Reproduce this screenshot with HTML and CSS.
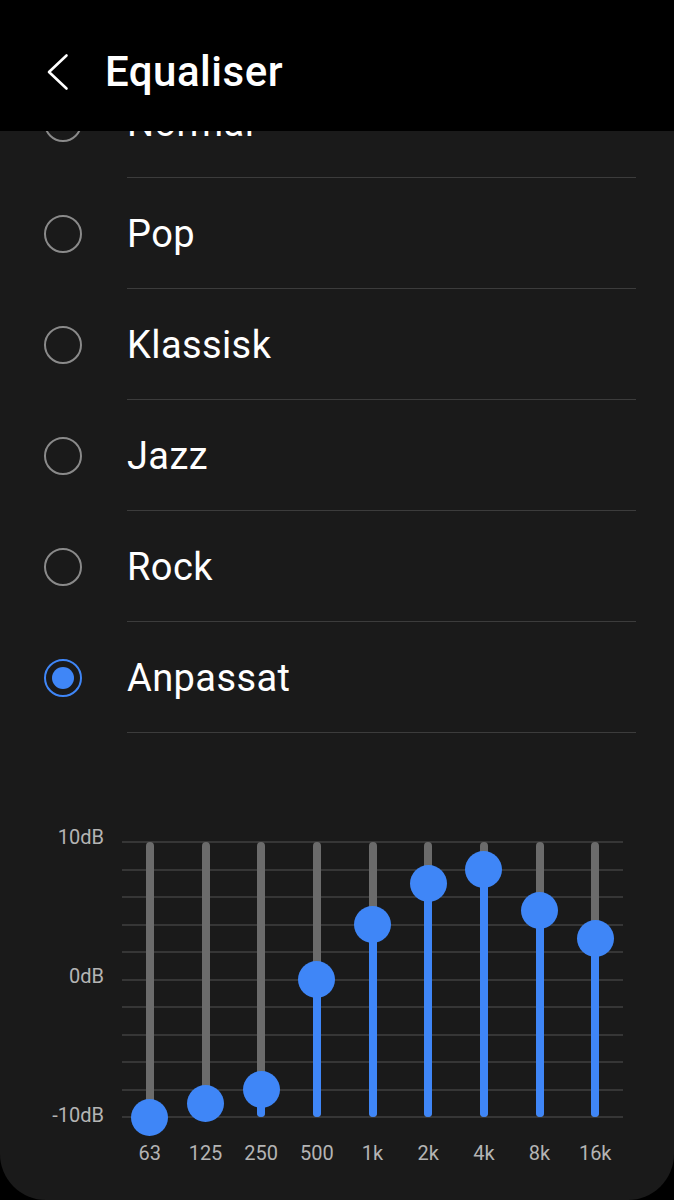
FILE: index.html
```html
<!DOCTYPE html>
<html lang="en">

<head>
  <meta charset="utf-8">
  <meta name="viewport" content="width=device-width, initial-scale=1">
  <title>Equaliser</title>
  <link rel="stylesheet" href="styles.css">
</head>

<body>
  <div class="screen">
    <header class="app-bar">
      <svg class="back" width="24" height="40" viewBox="0 0 24 40">
        <polyline points="21.5,3.5 4,20 21.5,36.5" fill="none" stroke="#fff" stroke-width="2.6" stroke-linecap="round" stroke-linejoin="round"/>
      </svg>
      <h1 class="title">Equaliser</h1>
    </header>

    <div class="presets">
      <ul class="preset-list">
        <li class="preset first"><span class="radio"></span><span class="label">Normal</span></li>
        <li class="preset"><span class="radio"></span><span class="label">Pop</span></li>
        <li class="preset"><span class="radio"></span><span class="label">Klassisk</span></li>
        <li class="preset"><span class="radio"></span><span class="label">Jazz</span></li>
        <li class="preset"><span class="radio"></span><span class="label">Rock</span></li>
        <li class="preset"><span class="radio checked"></span><span class="label">Anpassat</span></li>
      </ul>

      <div class="chart">
        <div class="y-axis">
          <span>10dB</span>
          <span>0dB</span>
          <span>-10dB</span>
        </div>
        <div class="plot-col">
          <div class="plot" id="plot"></div>
          <div class="x-axis" id="xaxis"></div>
        </div>
      </div>
    </div>
  </div>

  <script>
    const bands = [
      { f: '63', v: -10 },
      { f: '125', v: -9 },
      { f: '250', v: -8 },
      { f: '500', v: 0 },
      { f: '1k', v: 4 },
      { f: '2k', v: 7 },
      { f: '4k', v: 8 },
      { f: '8k', v: 5 },
      { f: '16k', v: 3 }
    ];
    const plot = document.getElementById('plot');
    const xaxis = document.getElementById('xaxis');
    const step = 13.75; // px per dB

    bands.forEach(b => {
      const h = (b.v + 10) * step;
      const band = document.createElement('div');
      band.className = 'band';
      band.innerHTML =
        '<div class="track">' +
        '<div class="fill" style="height:' + h + 'px"></div>' +
        '<div class="knob" style="bottom:' + (h - 18.5) + 'px"></div>' +
        '</div>';
      plot.appendChild(band);

      const lbl = document.createElement('span');
      lbl.textContent = b.f;
      xaxis.appendChild(lbl);
    });
  </script>
</body>

</html>
```

FILE: styles.css
```css
* {
  margin: 0;
  padding: 0;
  box-sizing: border-box;
}

ul {
  list-style: none;
}

html,
body {
  width: 100%;
  height: 100%;
  background-color: #000;
}

body {
  font-family: Roboto, "Noto Sans", Arial, sans-serif;
  color: #fff;
}

.screen {
  height: 1200px;
  background-color: #1a1a1a;
  border-radius: 0 0 46px 46px;
  overflow: hidden;
  display: flex;
  flex-direction: column;
}

.app-bar {
  height: 131px;
  background-color: #000;
  display: flex;
  align-items: center;
  flex-shrink: 0;
  padding-top: 12px;
}

.back {
  margin-left: 45px;
}

.title {
  margin-left: 36px;
  font-size: 42px;
  font-weight: 500;
  letter-spacing: 0.5px;
}

.presets {
  flex: 1;
  overflow: hidden;
}

.preset {
  height: 111px;
  display: flex;
  align-items: center;
  padding-left: 44px;
}

.preset.first {
  margin-top: -64px;
}

.radio {
  width: 38px;
  height: 38px;
  border-radius: 50%;
  border: 2px solid #8a8a8a;
  flex-shrink: 0;
  display: flex;
  align-items: center;
  justify-content: center;
}

.radio.checked {
  border-color: #3f86f7;
}

.radio.checked::after {
  content: "";
  width: 22px;
  height: 22px;
  border-radius: 50%;
  background-color: #3f86f7;
}

.label {
  flex: 1;
  height: 100%;
  margin-left: 45px;
  margin-right: 38px;
  display: flex;
  align-items: center;
  border-bottom: 1.5px solid #3c3c3c;
  font-size: 38px;
  letter-spacing: 0.4px;
  padding-top: 2px;
}

.chart {
  display: flex;
  align-items: flex-start;
  margin-top: 94px;
}

.y-axis {
  width: 104px;
  height: 298px;
  display: flex;
  flex-direction: column;
  justify-content: space-between;
  align-items: flex-end;
  font-size: 20px;
  line-height: 20px;
  color: #b4b4b4;
}

.plot-col {
  margin-left: 18px;
  width: 501px;
  margin-top: 14px;
}

.plot {
  height: 277px;
  display: flex;
  background-image: repeating-linear-gradient(to bottom, #363636 0, #363636 2px, transparent 2px, transparent 27.5px);
}

.band {
  flex: 1;
  display: flex;
  justify-content: center;
}

.track {
  position: relative;
  width: 8px;
  height: 275px;
  margin-top: 1px;
  border-radius: 4px;
  background-color: #6b6b6b;
}

.fill {
  position: absolute;
  left: 0;
  right: 0;
  bottom: 0;
  border-radius: 4px;
  background-color: #3f86f7;
}

.knob {
  position: absolute;
  left: 50%;
  width: 37px;
  height: 37px;
  margin-left: -18.5px;
  border-radius: 50%;
  background-color: #3f86f7;
}

.x-axis {
  display: flex;
  margin-top: 25px;
  font-size: 20px;
  line-height: 20px;
  color: #b4b4b4;
}

.x-axis span {
  flex: 1;
  text-align: center;
}
```
